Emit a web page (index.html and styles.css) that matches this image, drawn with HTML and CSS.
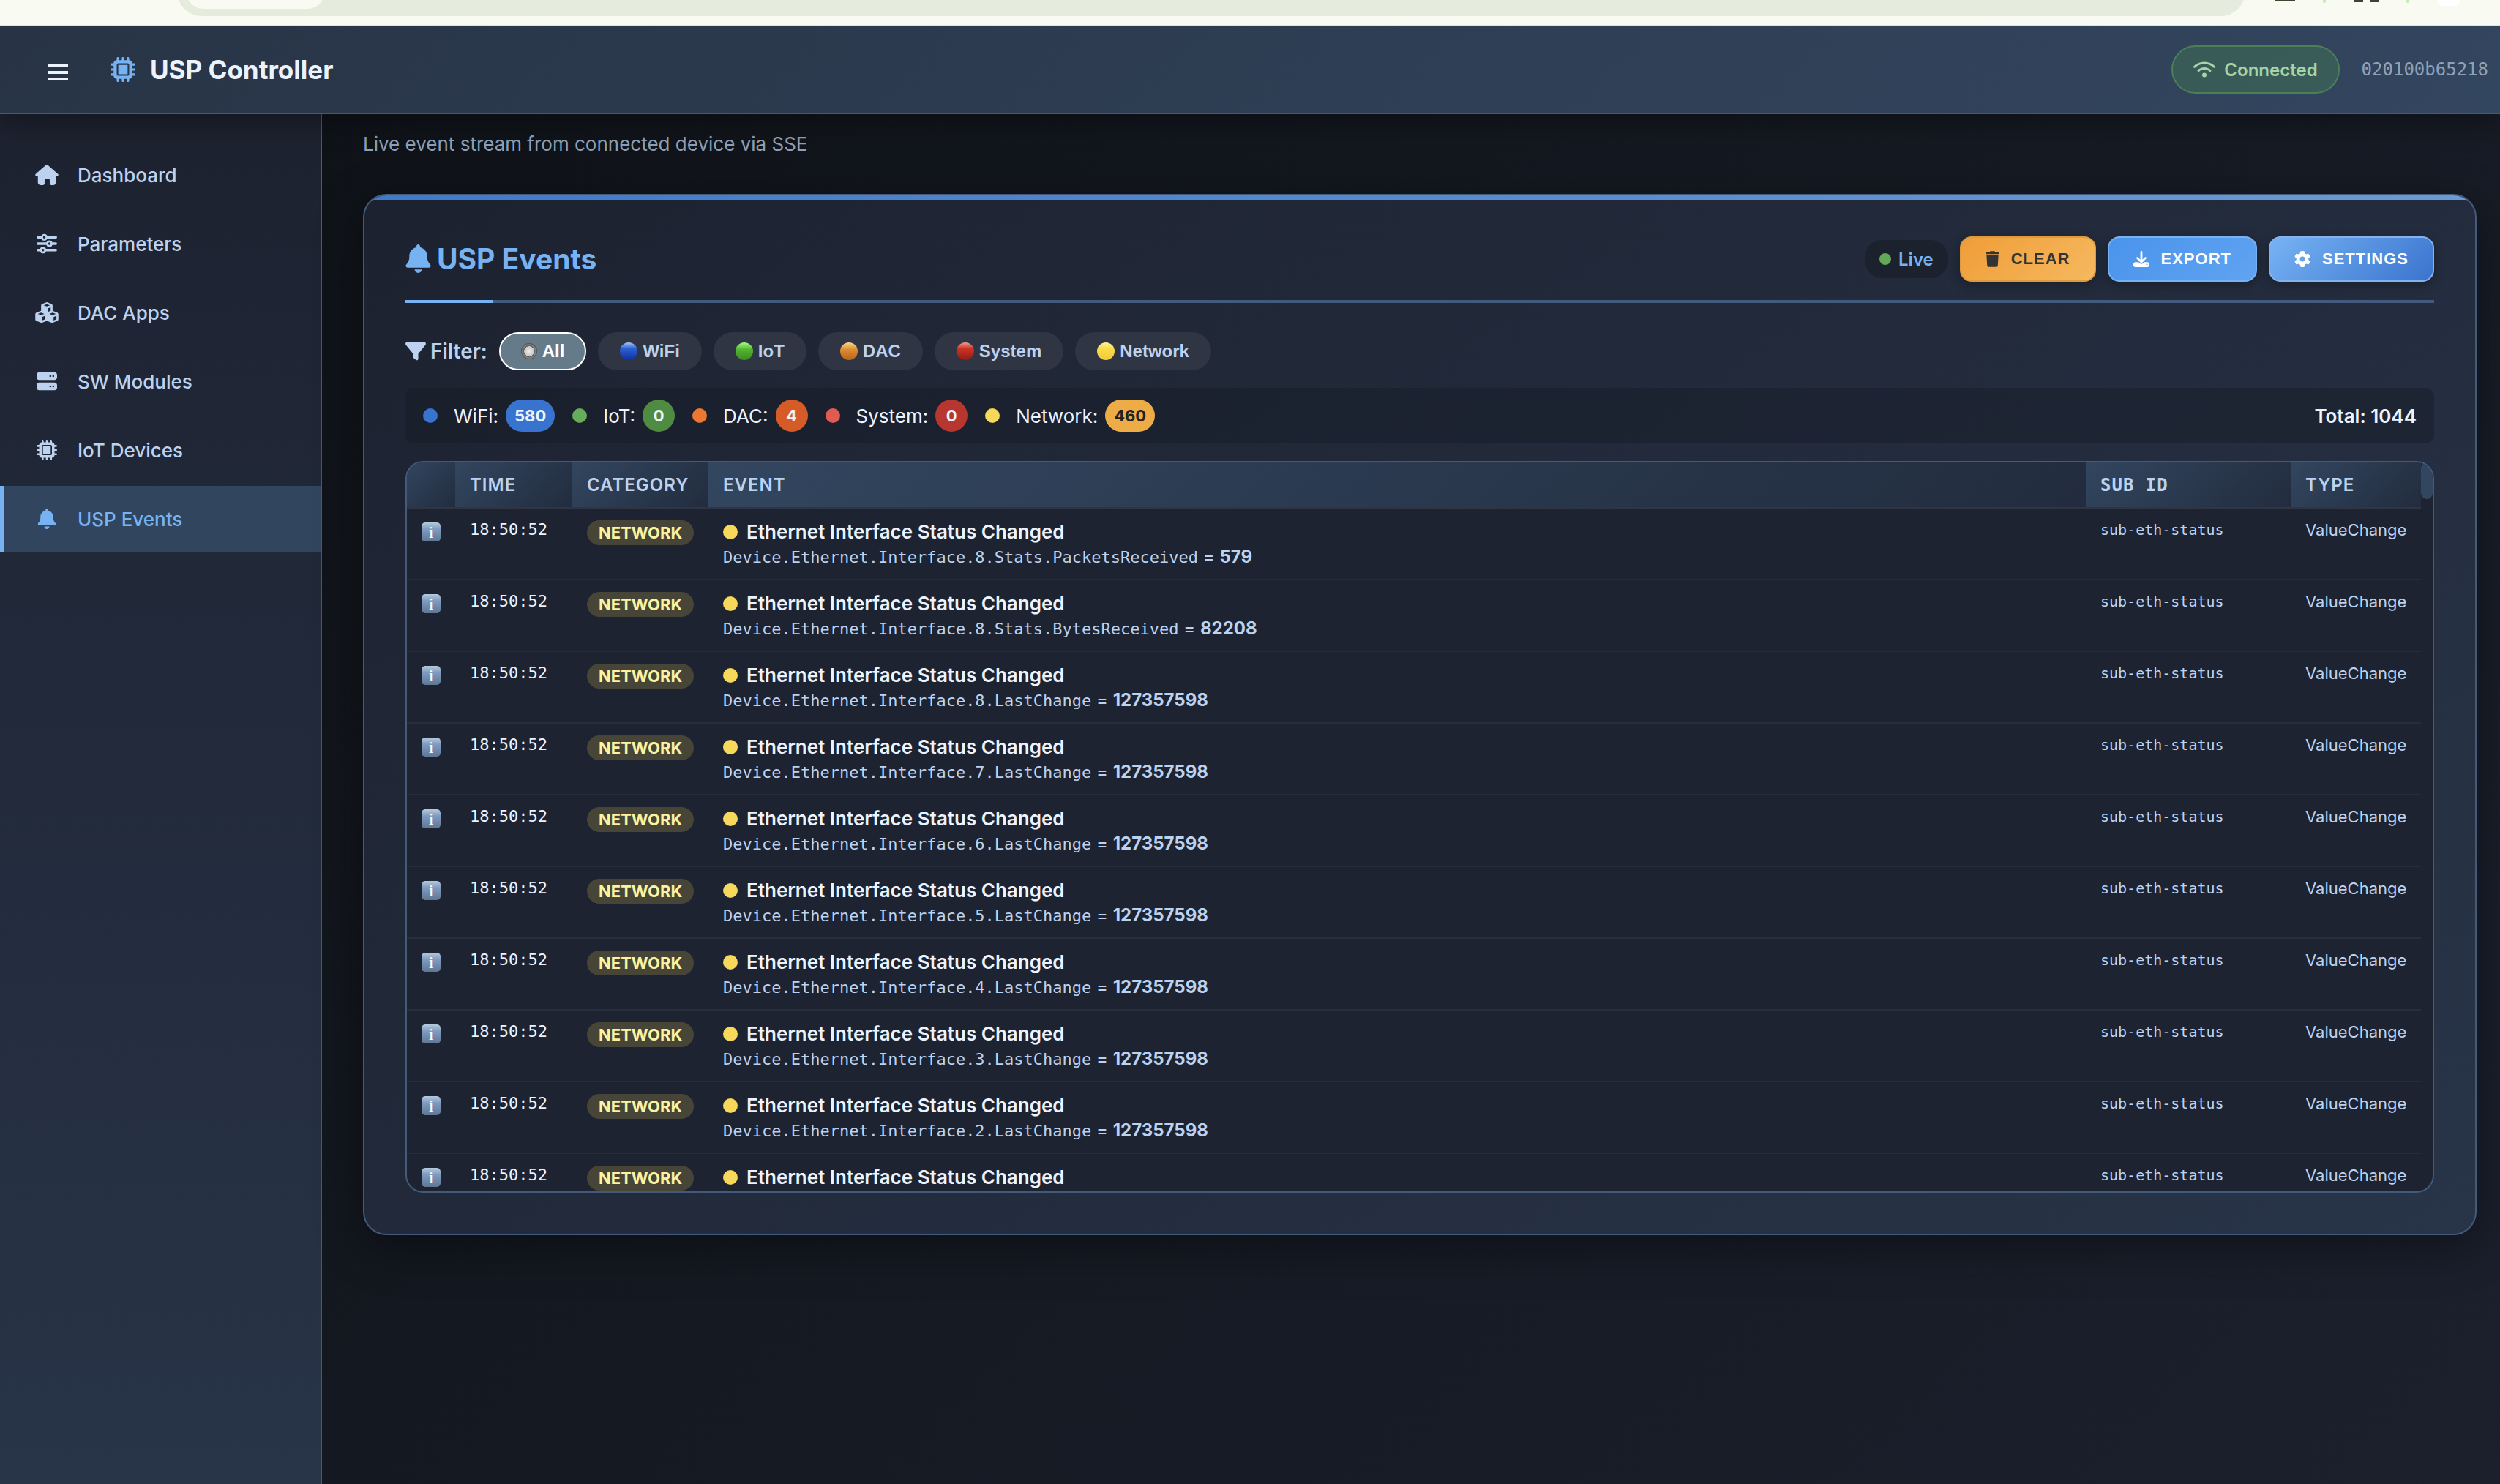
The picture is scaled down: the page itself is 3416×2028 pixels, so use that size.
FILE: index.html
```html
<!DOCTYPE html>
<html lang="en">
<head>
<meta charset="UTF-8">
<title>USP Controller</title>
<link rel="stylesheet" href="styles.css">
</head>
<body>

<!-- Icon sprite -->
<svg width="0" height="0" class="sprite">
  <symbol id="i-chip" viewBox="0 0 512 512"><path fill-rule="evenodd" d="M176 24c0-13.300-10.700-24-24-24s-24 10.700-24 24v40c-35.300 0-64 28.700-64 64H24c-13.300 0-24 10.700-24 24s10.700 24 24 24h40v56H24c-13.300 0-24 10.700-24 24s10.700 24 24 24h40v56H24c-13.300 0-24 10.700-24 24s10.700 24 24 24h40c0 35.300 28.700 64 64 64v40c0 13.300 10.700 24 24 24s24-10.700 24-24v-40h56v40c0 13.300 10.700 24 24 24s24-10.700 24-24v-40h56v40c0 13.300 10.700 24 24 24s24-10.700 24-24v-40c35.300 0 64-28.700 64-64h40c13.300 0 24-10.700 24-24s-10.700-24-24-24h-40v-56h40c13.300 0 24-10.700 24-24s-10.700-24-24-24h-40v-56h40c13.300 0 24-10.700 24-24s-10.700-24-24-24h-40c0-35.300-28.700-64-64-64V24c0-13.300-10.700-24-24-24s-24 10.700-24 24v40h-56V24c0-13.300-10.700-24-24-24s-24 10.700-24 24v40h-56V24zM160 128h192c17.700 0 32 14.300 32 32v192c0 17.700-14.300 32-32 32H160c-17.700 0-32-14.300-32-32V160c0-17.700 14.300-32 32-32zm192 32H160v192h192V160z"/></symbol>
  <symbol id="i-home" viewBox="0 0 576 512"><path d="M575.800 255.500c0 18-15 32.100-32 32.100h-32l.7 160.200c0 35-28 64.200-63.500 64.200h-49c-22 0-40-18-40-40v-88c0-17.700-14.300-32-32-32h-64c-17.700 0-32 14.300-32 32v88c0 22-18 40-40 40h-56c-35 0-72-28-72-64V287.600H32c-18 0-32-14-32-32.100 0-9 3-17 10-24L266.400 8c7-7 15-8 22-8s15 2 21 7l255.400 224.500c8 7 12 15 11 24z"/></symbol>
  <symbol id="i-sliders" viewBox="0 0 512 512"><path fill-rule="evenodd" d="M32 64h85a80 80 0 0 1 150 0h213a32 32 0 0 1 0 64H267a80 80 0 0 1-150 0H32a32 32 0 0 1 0-64zm160 0a32 32 0 1 0 0 64 32 32 0 0 0 0-64zM32 224h213a80 80 0 0 1 150 0h85a32 32 0 0 1 0 64h-85a80 80 0 0 1-150 0H32a32 32 0 0 1 0-64zm288 0a32 32 0 1 0 0 64 32 32 0 0 0 0-64zM32 384h53a80 80 0 0 1 150 0h245a32 32 0 0 1 0 64H235a80 80 0 0 1-150 0H32a32 32 0 0 1 0-64zm128 0a32 32 0 1 0 0 64 32 32 0 0 0 0-64z"/></symbol>
  <symbol id="i-cubes" viewBox="0 0 576 512"><path fill-rule="evenodd" d="M288 0l112 40c20 8 32 24 32 45v130l112 42c20 8 32 24 32 45v123c0 18-10 34-27 42l-112 43c-10 4-20 4-30 0l-119-46-119 46c-10 4-20 4-30 0L27 467C10 459 0 443 0 425V302c0-21 12-37 32-45l112-42V85c0-21 12-37 32-45zM288 50l-78 28 78 29 78-29zM312 155v88l72-29v-88zM144 262l-82 29 82 31 82-31zM168 368v88l78-32v-86zM432 262l-82 29 82 31 82-31zM456 368v88l72-30v-88z"/></symbol>
  <symbol id="i-server" viewBox="0 0 512 512"><path fill-rule="evenodd" d="M64 32h384c35 0 64 29 64 64v64c0 35-29 64-64 64H64c-35 0-64-29-64-64V96c0-35 29-64 64-64zm280 72a24 24 0 1 0 0 48 24 24 0 0 0 0-48zm72 0a24 24 0 1 0 0 48 24 24 0 0 0 0-48zM64 288h384c35 0 64 29 64 64v64c0 35-29 64-64 64H64c-35 0-64-29-64-64v-64c0-35 29-64 64-64zm280 72a24 24 0 1 0 0 48 24 24 0 0 0 0-48zm72 0a24 24 0 1 0 0 48 24 24 0 0 0 0-48z"/></symbol>
  <symbol id="i-bell" viewBox="0 0 448 512"><path d="M224 0c-17.700 0-32 14.300-32 32v19.200C119 66 64 130.600 64 208v18.800c0 47-17.300 92.400-48.500 127.600l-7.400 8.300c-8.400 9.400-10.400 22.900-5.300 34.400S19.400 416 32 416h384c12.600 0 24-7.400 29.200-18.900s3.100-25-5.300-34.400l-7.400-8.300C401.300 319.200 384 273.900 384 226.800V208c0-77.400-55-142-128-156.800V32c0-17.700-14.300-32-32-32zm45.300 493.300c12-12 18.700-28.300 18.700-45.300H160c0 17 6.700 33.300 18.700 45.300S207 512 224 512s33.300-6.700 45.300-18.700z"/></symbol>
  <symbol id="i-wifi" viewBox="0 0 640 512"><path d="M54 201C123 134 216 96 320 96s197 38 266 105c13 12 33 12 45-1s12-33-1-45C550 78 440 32 320 32S90 78 10 155c-13 12-14 33-1 45s32 13 45 1zM320 256c57 0 109 21 149 56 13 12 33 11 45-3s10-33-3-45c-51-45-118-72-191-72s-140 27-191 72c-13 12-15 32-3 45s32 15 45 3c40-35 92-56 149-56zm64 160a64 64 0 1 0-128 0 64 64 0 1 0 128 0z"/></symbol>
  <symbol id="i-trash" viewBox="0 0 448 512"><path d="M135 18L128 32H32C14 32 0 46 0 64s14 32 32 32h384c18 0 32-14 32-32s-14-32-32-32h-96l-7-14C307 7 296 0 284 0H164c-12 0-23 7-29 18zM416 128H32l21 339c2 25 23 45 48 45h246c25 0 46-20 48-45z"/></symbol>
  <symbol id="i-download" viewBox="0 0 512 512"><path fill-rule="evenodd" d="M288 32a32 32 0 0 0-64 0v243l-73-74c-13-12-33-12-46 0s-12 33 0 46l128 128c13 12 33 12 46 0l128-128c12-13 12-33 0-46s-33-12-46 0l-73 74zM64 352c-35 0-64 29-64 64v32c0 35 29 64 64 64h384c35 0 64-29 64-64v-32c0-35-29-64-64-64H347l-46 45c-25 25-65 25-90 0l-46-45zm368 56a24 24 0 1 1 0 48 24 24 0 1 1 0-48z"/></symbol>
  <symbol id="i-gear" viewBox="0 0 512 512"><path fill-rule="evenodd" d="M496 167c3 9 0 18-7 25l-43 39a200 200 0 0 1 0 50l43 39c7 7 10 16 7 25-9 25-22 49-38 71-6 7-15 10-24 7l-56-18c-13 10-28 19-43 25l-12 58c-2 9-9 16-19 17a260 260 0 0 1-96 0c-10-1-17-8-19-17l-12-58c-15-6-30-15-43-25l-56 18c-9 3-18 0-24-7-16-22-29-46-38-71-3-9 0-18 7-25l43-39a200 200 0 0 1 0-50l-43-39c-7-7-10-16-7-25 9-25 22-49 38-71 6-7 15-10 24-7l56 18c13-10 28-19 43-25l12-58c2-9 9-16 19-17a260 260 0 0 1 96 0c10 1 17 8 19 17l12 58c15 6 30 15 43 25l56-18c9-3 18 0 24 7 16 22 29 46 38 71zM256 336a80 80 0 1 0 0-160 80 80 0 1 0 0 160z"/></symbol>
  <symbol id="i-filter" viewBox="0 0 512 512"><path d="M4 54C9 41 22 32 37 32h438c15 0 28 9 33 22s4 29-6 40L320 320v128c0 12-7 23-18 29s-24 4-34-3l-64-48c-8-6-12-16-12-26v-80L10 94C0 83-2 67 4 54z"/></symbol>
</svg>

<!-- Browser toolbar -->
<div class="browser-bar">
  <div class="omnibox"><div class="chip"></div></div>
  <div class="browser-icons">
    <span class="mark tray"></span>
    <span class="mark sep"></span>
    <span class="mark search"></span>
    <span class="mark sep"></span>
    <span class="mark avatar"></span>
  </div>
</div>

<header class="header">
  <button class="menu-btn" aria-label="Toggle menu"><span></span><span></span><span></span></button>
  <div class="brand">
    <svg class="brand-icon"><use href="#i-chip"/></svg>
    <h1>USP Controller</h1>
  </div>
  <div class="status"><svg><use href="#i-wifi"/></svg>Connected</div>
  <span class="device-id">020100b65218</span>
</header>

<div class="layout">
  <nav class="sidebar">
    <a href="#dashboard"><svg><use href="#i-home"/></svg>Dashboard</a>
    <a href="#parameters"><svg><use href="#i-sliders"/></svg>Parameters</a>
    <a href="#dac-apps"><svg><use href="#i-cubes"/></svg>DAC Apps</a>
    <a href="#sw-modules"><svg><use href="#i-server"/></svg>SW Modules</a>
    <a href="#iot-devices"><svg><use href="#i-chip"/></svg>IoT Devices</a>
    <a href="#usp-events" class="active"><svg><use href="#i-bell"/></svg>USP Events</a>
  </nav>

  <main class="content">
    <p class="subtitle">Live event stream from connected device via SSE</p>

    <section class="card">
      <div class="card-header">
        <h2><svg><use href="#i-bell"/></svg>USP Events</h2>
        <div class="actions">
          <span class="live"><i></i>Live</span>
          <button class="btn clear"><svg><use href="#i-trash"/></svg>CLEAR</button>
          <button class="btn export"><svg><use href="#i-download"/></svg>EXPORT</button>
          <button class="btn settings"><svg><use href="#i-gear"/></svg>SETTINGS</button>
        </div>
      </div>

      <div class="filters">
        <span class="filter-label"><svg><use href="#i-filter"/></svg>Filter:</span>
        <button class="filter active"><i class="ball radio"></i>All</button>
        <button class="filter"><i class="ball blue"></i>WiFi</button>
        <button class="filter"><i class="ball green"></i>IoT</button>
        <button class="filter"><i class="ball orange"></i>DAC</button>
        <button class="filter"><i class="ball red"></i>System</button>
        <button class="filter"><i class="ball yellow"></i>Network</button>
      </div>

      <div class="stats">
        <span class="stat wifi"><i></i>WiFi: <b>580</b></span>
        <span class="stat iot"><i></i>IoT: <b>0</b></span>
        <span class="stat dac"><i></i>DAC: <b>4</b></span>
        <span class="stat system"><i></i>System: <b>0</b></span>
        <span class="stat network"><i></i>Network: <b>460</b></span>
        <strong class="total">Total: 1044</strong>
      </div>

      <div class="table-wrap">
        <table>
          <colgroup>
            <col class="col-icon"><col class="col-time"><col class="col-cat"><col><col class="col-sub"><col class="col-type">
          </colgroup>
          <thead>
            <tr><th></th><th>TIME</th><th>CATEGORY</th><th>EVENT</th><th class="sub">SUB ID</th><th>TYPE</th></tr>
          </thead>
          <tbody id="events"></tbody>
        </table>
        <div class="scroll-thumb"></div>
      </div>
    </section>
  </main>
</div>

<script>
const events = [
  ["8.Stats.PacketsReceived", "579"],
  ["8.Stats.BytesReceived", "82208"],
  ["8.LastChange", "127357598"],
  ["7.LastChange", "127357598"],
  ["6.LastChange", "127357598"],
  ["5.LastChange", "127357598"],
  ["4.LastChange", "127357598"],
  ["3.LastChange", "127357598"],
  ["2.LastChange", "127357598"],
  ["1.LastChange", "127357598"]
];

document.getElementById("events").innerHTML = events.map(([path, value]) => `
  <tr>
    <td><span class="info">i</span></td>
    <td class="time">18:50:52</td>
    <td><span class="badge">NETWORK</span></td>
    <td>
      <div class="event-title"><i></i>Ethernet Interface Status Changed</div>
      <div class="event-path"><code>Device.Ethernet.Interface.${path}</code> = <b>${value}</b></div>
    </td>
    <td class="sub-id">sub-eth-status</td>
    <td class="type">ValueChange</td>
  </tr>`).join("");
</script>
</body>
</html>
```
FILE: styles.css
```css
* {
  box-sizing: border-box;
  margin: 0;
  padding: 0;
}
body {
  font-family: Inter, "Liberation Sans", sans-serif;
  font-size: 26px;
  color: #ecf3fd;
  background: #11151c;
  min-height: 100vh;
  display: flex;
  flex-direction: column;
}
svg {
  fill: currentColor;
  flex: none;
}
.sprite {
  position: absolute;
}

/* browser toolbar */
.browser-bar {
  position: relative;
  z-index: 3;
  display: flex;
  height: 36px;
  padding-left: 242px;
  background: #f9faf2;
  border-bottom: 2px solid #e0e6d8;
  overflow: hidden;
}
/* only the lower part of the address bar is in view */
.omnibox {
  display: flex;
  align-items: flex-end;
  flex: 1;
  height: 68px;
  margin-top: -46px;
  padding: 0 12px 10px;
  background: #e5ebdd;
  border-radius: 34px;
}
.chip {
  width: 190px;
  height: 48px;
  background: #f9faf2;
  border-radius: 24px;
}
.browser-icons {
  display: flex;
  width: 348px;
  padding-left: 40px;
  gap: 38px;
}
.mark.tray {
  width: 28px;
  height: 2px;
  background: #3a4632;
}
.mark.sep {
  width: 4px;
  height: 4px;
  border-radius: 0 0 2px 2px;
  background: #c0efae;
}
.mark.search {
  width: 34px;
  height: 3px;
  border-left: 13px solid #3a4632;
  border-right: 12px solid #3a4632;
}
.mark.avatar {
  width: 32px;
  height: 8px;
  background: #fff;
  border-radius: 0 0 16px 16px;
}

/* header */
.header {
  position: relative;
  z-index: 2;
  display: flex;
  align-items: center;
  height: 120px;
  padding: 0 16px 0 48px;
  background: linear-gradient(135deg, #283446 0%, #33465f 100%);
  border-bottom: 2px solid #425a7c;
  box-shadow: 0 8px 40px rgba(0, 0, 0, 0.4);
}
.menu-btn {
  display: flex;
  flex-direction: column;
  gap: 5px;
  padding: 18px;
  margin-top: 8px;
  background: none;
  border: none;
  cursor: pointer;
}
.menu-btn span {
  width: 27px;
  height: 4px;
  background: #ecf3fd;
}
.brand {
  display: flex;
  align-items: center;
  gap: 20px;
  flex: 1;
  margin-left: 40px;
}
.brand-icon {
  width: 34px;
  height: 34px;
  color: #77b3f3;
}
.brand h1 {
  font-size: 35px;
  line-height: 44px;
  font-weight: 700;
}
.status {
  display: flex;
  align-items: center;
  gap: 12px;
  height: 66px;
  padding: 0 28px;
  margin-right: 30px;
  font-size: 24px;
  font-weight: 600;
  color: #a5d5a7;
  background: rgba(76, 145, 80, 0.3);
  border: 2px solid #4b8057;
  border-radius: 40px;
}
.status svg {
  width: 30px;
  height: 24px;
}
.device-id {
  font-family: "DejaVu Sans Mono", monospace;
  font-size: 24px;
  color: #8fa1b8;
}

/* sidebar */
.layout {
  display: flex;
  flex: 1;
}
.sidebar {
  display: flex;
  flex-direction: column;
  gap: 4px;
  width: 440px;
  padding-top: 38px;
  background: linear-gradient(180deg, #1d2230 0%, #283448 100%);
  border-right: 2px solid #425a7c;
}
.sidebar a {
  display: flex;
  align-items: center;
  gap: 26px;
  height: 90px;
  padding-left: 42px;
  border-left: 6px solid transparent;
  color: #bcd2ef;
  font-weight: 500;
  text-decoration: none;
}
.sidebar svg {
  width: 32px;
  height: 28px;
}
.sidebar a.active {
  color: #77b3f3;
  background: #32455e;
  border-left-color: #77b3f3;
}

/* content */
.content {
  flex: 1;
  min-width: 0;
  padding: 24px 32px 56px 56px;
  background: linear-gradient(135deg, #0f1318 0%, #1c202d 100%);
}
.subtitle {
  line-height: 34px;
  margin-bottom: 51px;
  color: #8fa1b8;
}
.card {
  position: relative;
  padding: 56px;
  background: linear-gradient(145deg, #1d2230 0%, #283448 100%);
  border: 2px solid #425a7c;
  border-radius: 32px;
  box-shadow: 0 16px 64px rgba(0, 0, 0, 0.4);
  overflow: hidden;
}
.card::before {
  content: "";
  position: absolute;
  top: 0;
  left: 0;
  right: 0;
  height: 6px;
  background: linear-gradient(90deg, #3f7ac9, #6b9ad4);
}
.card-header {
  position: relative;
  display: flex;
  justify-content: space-between;
  height: 91px;
  border-bottom: 4px solid #425a7c;
  margin-bottom: 40px;
}
.card-header::after {
  content: "";
  position: absolute;
  left: 0;
  bottom: -4px;
  width: 120px;
  height: 4px;
  background: #77b3f3;
}
.card-header h2 {
  display: flex;
  align-items: center;
  gap: 8px;
  height: 60px;
  font-size: 39px;
  font-weight: 700;
  color: #77b3f3;
}
.card-header h2 svg {
  width: 35px;
  height: 39px;
}
.actions {
  display: flex;
  align-items: center;
  gap: 16px;
  height: 62px;
}
.live {
  display: flex;
  align-items: center;
  gap: 10px;
  height: 52px;
  padding: 0 20px;
  font-size: 24px;
  font-weight: 600;
  color: #77b3f3;
  background: #1b222d;
  border-radius: 24px;
}
.live i {
  width: 16px;
  height: 16px;
  border-radius: 50%;
  background: #63a857;
}
.btn {
  display: flex;
  align-items: center;
  gap: 16px;
  height: 62px;
  padding: 0 33px;
  font-family: "Liberation Sans", Arial, sans-serif;
  font-size: 22px;
  font-weight: 700;
  letter-spacing: 1px;
  color: #fff;
  border: 2px solid #77b3f3;
  border-radius: 16px;
  box-shadow: 0 4px 16px rgba(0, 0, 0, 0.3);
  cursor: pointer;
}
.btn svg {
  width: 22px;
  height: 22px;
}
.btn.clear {
  color: #333;
  background: linear-gradient(135deg, #f09d38, #f5b95f);
  border-color: #dd9a41;
}
.btn.clear svg {
  width: 19px;
}
.btn.export {
  background: linear-gradient(135deg, #4a94ec, #60a3f1);
}
.btn.settings {
  background: linear-gradient(135deg, #77b3f3, #3a74cf);
  border-color: #85b2ee;
}

/* filters */
.filters {
  display: flex;
  align-items: center;
  gap: 16px;
  margin-bottom: 24px;
}
.filter-label {
  display: flex;
  align-items: center;
  gap: 6px;
  font-size: 28px;
  font-weight: 600;
  color: #bcd2ef;
}
.filter-label svg {
  width: 28px;
  height: 28px;
}
.filter {
  display: flex;
  align-items: center;
  gap: 7px;
  height: 52px;
  padding: 0 28px;
  font-family: "Liberation Sans", Arial, sans-serif;
  font-size: 24px;
  font-weight: 700;
  color: #bcd2ef;
  background: #2f3542;
  border: 2px solid transparent;
  border-radius: 26px;
  cursor: pointer;
}
.filter.active {
  color: #fff;
  background: #667b89;
  border-color: #fff;
}
.ball {
  width: 24px;
  height: 24px;
  border-radius: 50%;
}
.ball.radio {
  width: 22px;
  height: 22px;
  background: radial-gradient(circle, #eee 0, #c8c8c8 42%, #555 46%, #8a8a8a 58%, #4a4a4a 70%);
}
.ball.blue { background: linear-gradient(#a9c4f5, #2b5fd4 35%, #10319c); }
.ball.green { background: linear-gradient(#a0ff80, #52b531 40%, #3d8a22); }
.ball.orange { background: linear-gradient(#fbd78e, #dd8d31 40%, #b9641c); }
.ball.red { background: linear-gradient(#f29a94, #cb3325 35%, #931c12); }
.ball.yellow { background: linear-gradient(#fdf3a0, #f8dc48 35%, #f3c93c); }

/* stats bar */
.stats {
  display: flex;
  align-items: center;
  gap: 24px;
  height: 76px;
  padding: 0 24px;
  margin-bottom: 24px;
  background: rgba(20, 26, 34, 0.4);
  border-radius: 12px;
}
.stat {
  display: flex;
  align-items: center;
}
.stat i {
  width: 20px;
  height: 20px;
  margin-right: 22px;
  border-radius: 50%;
}
.stat b {
  min-width: 44px;
  margin-left: 10px;
  padding: 0 12px;
  line-height: 44px;
  font-size: 22px;
  font-weight: 700;
  text-align: center;
  border-radius: 22px;
}
.wifi i, .wifi b { background: #3873cf; }
.iot i { background: #66ad5b; }
.iot b { background: #4f8c42; }
.dac i { background: #ef7830; }
.dac b { background: #d65b26; }
.system i { background: #df5b54; }
.system b { background: #b73730; }
.network i { background: #f6d95b; }
.network b { background: #eeac47; color: #222; }
.total {
  margin-left: auto;
  font-weight: 600;
}

/* events table */
.table-wrap {
  position: relative;
  height: 1000px;
  padding-right: 16px;
  background: #1d2330;
  border: 2px solid #425a7c;
  border-radius: 24px;
  overflow: hidden;
}
.scroll-thumb {
  position: absolute;
  top: 0;
  right: 0;
  width: 16px;
  height: 50px;
  background: #33465f;
  border-radius: 8px;
}
table {
  width: 100%;
  table-layout: fixed;
  border-collapse: separate;
  border-spacing: 0;
}
.col-icon { width: 66px; }
.col-time { width: 160px; }
.col-cat { width: 186px; }
.col-sub { width: 280px; }
.col-type { width: 178px; }
th {
  height: 63px;
  padding: 0 20px;
  font-size: 24px;
  font-weight: 600;
  letter-spacing: 1px;
  text-align: left;
  color: #bcd2ef;
  background: linear-gradient(135deg, #32465f, #222c3e);
  border-bottom: 2px solid #2f3542;
}
th.sub {
  font-family: "DejaVu Sans Mono", monospace;
  font-weight: 700;
}
td {
  height: 98px;
  padding: 15px 20px 0;
  vertical-align: top;
  border-bottom: 2px solid #272d3a;
}
.info {
  display: block;
  width: 26px;
  height: 26px;
  margin-top: 4px;
  font-family: "Liberation Serif", serif;
  font-size: 24px;
  line-height: 26px;
  text-align: center;
  color: #fff;
  background: linear-gradient(#b4cade, #7f9bc0 35%, #5f7796);
  border-radius: 5px;
}
.time {
  font-family: "DejaVu Sans Mono", monospace;
  font-size: 22px;
  line-height: 28px;
}
.badge {
  display: inline-block;
  margin-top: 1px;
  padding: 0 16px;
  font-size: 22px;
  font-weight: 700;
  line-height: 34px;
  color: #fbf3a0;
  background: #464538;
  border-radius: 17px;
}
.event-title {
  display: flex;
  align-items: center;
  gap: 12px;
  line-height: 34px;
  font-weight: 600;
}
.event-title i {
  width: 20px;
  height: 20px;
  border-radius: 50%;
  background: #f6d95b;
}
.event-path {
  font-size: 24px;
  line-height: 34px;
  color: #bcd2ef;
}
.event-path code {
  font-family: "DejaVu Sans Mono", monospace;
  font-size: 22px;
}
.sub-id {
  font-family: "DejaVu Sans Mono", monospace;
  font-size: 20px;
  line-height: 28px;
  color: #bcd2ef;
}
.type {
  font-size: 22px;
  line-height: 28px;
  color: #bcd2ef;
}
```
